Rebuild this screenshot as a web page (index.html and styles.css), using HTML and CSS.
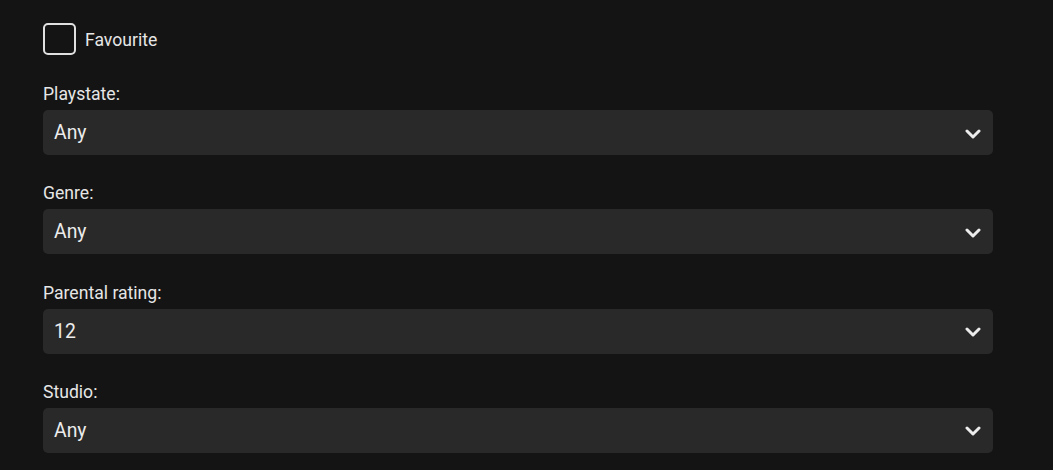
FILE: index.html
```html
<!DOCTYPE html>
<html lang="en">
<head>
<meta charset="utf-8">
<title>Filters</title>
<link rel="stylesheet" href="styles.css">
</head>
<body>
<div class="filters">
  <label class="check-row">
    <span class="checkbox"></span>
    <span class="check-label">Favourite</span>
  </label>

  <div class="field">
    <div class="field-label">Playstate:</div>
    <div class="select"><span class="value">Any</span>
      <svg class="chev" width="16" height="10" viewBox="0 0 16 10"><path d="M2 2 L8 8 L14 2" fill="none" stroke="#ececec" stroke-width="3" stroke-linecap="round" stroke-linejoin="round"/></svg>
    </div>
  </div>

  <div class="field">
    <div class="field-label">Genre:</div>
    <div class="select"><span class="value">Any</span>
      <svg class="chev" width="16" height="10" viewBox="0 0 16 10"><path d="M2 2 L8 8 L14 2" fill="none" stroke="#ececec" stroke-width="3" stroke-linecap="round" stroke-linejoin="round"/></svg>
    </div>
  </div>

  <div class="field">
    <div class="field-label">Parental rating:</div>
    <div class="select"><span class="value">12</span>
      <svg class="chev" width="16" height="10" viewBox="0 0 16 10"><path d="M2 2 L8 8 L14 2" fill="none" stroke="#ececec" stroke-width="3" stroke-linecap="round" stroke-linejoin="round"/></svg>
    </div>
  </div>

  <div class="field">
    <div class="field-label">Studio:</div>
    <div class="select"><span class="value">Any</span>
      <svg class="chev" width="16" height="10" viewBox="0 0 16 10"><path d="M2 2 L8 8 L14 2" fill="none" stroke="#ececec" stroke-width="3" stroke-linecap="round" stroke-linejoin="round"/></svg>
    </div>
  </div>
</div>
</body>
</html>
```

FILE: styles.css
```css
html, body {
  margin: 0;
  padding: 0;
  background: #141414;
  color: #e6e6e6;
  font-family: Roboto, "Noto Sans", sans-serif;
  height: 100%;
  overflow: hidden;
}

.filters {
  padding: 23px 0 0 43px;
  width: 950px;
  display: flex;
  flex-direction: column;
}

.check-row {
  display: flex;
  align-items: center;
  gap: 9px;
  height: 32px;
  margin-bottom: 28px;
}

.checkbox {
  box-sizing: border-box;
  width: 33px;
  height: 32px;
  border: 2px solid #e0e0e0;
  border-radius: 5px;
}

.check-label {
  font-size: 17.6px;
  color: #e6e6e6;
  padding-top: 2px;
}

.field {
  margin-bottom: 27.3px;
}

.field-label {
  font-size: 17.6px;
  line-height: 21px;
  padding-top: 1px;
  margin-bottom: 5px;
  color: #e6e6e6;
}

.select {
  box-sizing: border-box;
  height: 45px;
  background: #292929;
  border-radius: 5px;
  display: flex;
  align-items: center;
  justify-content: space-between;
  padding: 0 12px 0 11px;
}

.value {
  font-size: 19.4px;
  color: #ececec;
}

.chev {
  display: block;
  margin-top: 2px;
}
```
